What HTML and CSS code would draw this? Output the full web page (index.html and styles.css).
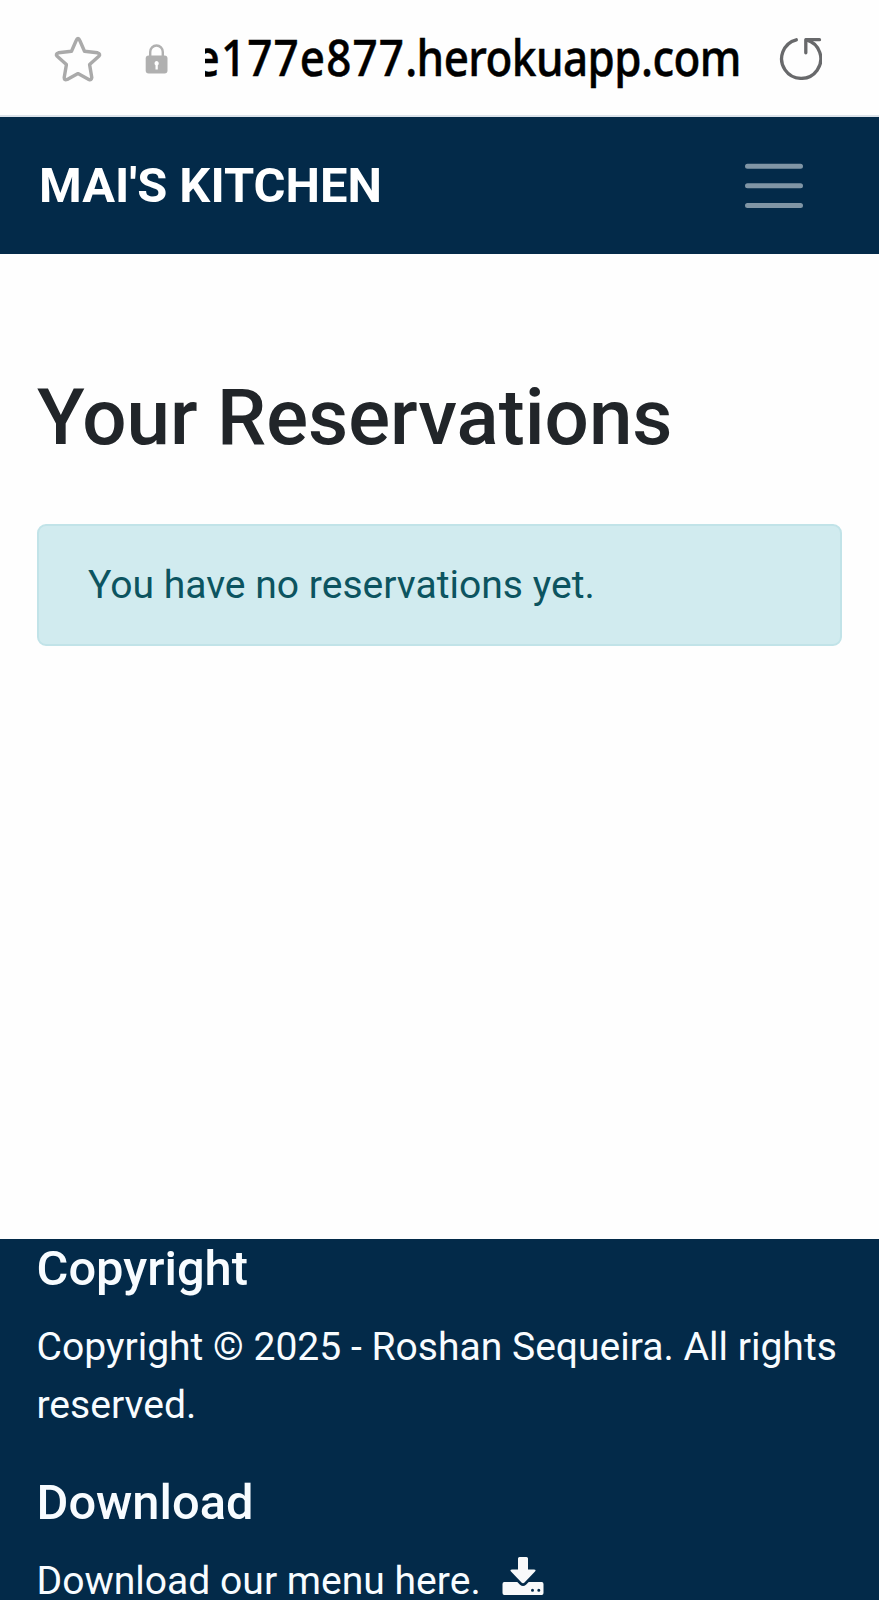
FILE: index.html
```html
<!DOCTYPE html>
<html lang="en">
<head>
<meta charset="utf-8">
<title>Your Reservations</title>
<link rel="stylesheet" href="styles.css">
</head>
<body>
<div class="browser-bar">
  <svg class="icon-star" viewBox="0 0 48 46" aria-hidden="true"><path d="M24 2.5 Q25 2.5 25.8 4.5 L30.5 15.2 L43.5 16.8 Q47 18 44.8 20.3 L35.6 28.6 L37.8 41.5 Q37.4 44.6 34.8 43.4 L24 37.6 L13.2 43.4 Q10.2 44.6 10.2 41.5 L12.4 28.6 L3.2 20.3 Q1 18 4.5 16.8 L17.5 15.2 L22.2 4.5 Q23 2.5 24 2.5 Z"/></svg>
  <svg class="icon-lock" viewBox="0 0 24 30" aria-hidden="true"><path class="shackle" d="M5.2 13V8a6.3 6.5 0 0 1 12.6 0v5"/><rect x=".7" y="11.5" width="21.8" height="18" rx="3"/><path class="keyhole" d="M11.6 17a2.3 2.3 0 0 0-1.1 4.2v4.3h2.3v-4.3A2.3 2.3 0 0 0 11.6 17Z"/></svg>
  <div class="url"><span class="url-text"><span class="url-id">e177e877</span>.herokuapp.com</span></div>
  <svg class="icon-reload" viewBox="0 0 44 44" aria-hidden="true"><path d="M18.3 3.8A19.6 19.6 0 1 0 28.5 3.9"/><path d="M41.5 3.7H27.8V16.8"/></svg>
</div>
<nav class="navbar">
  <a class="brand">MAI'S KITCHEN</a>
  <button class="toggler" aria-label="Toggle navigation"><svg viewBox="0 0 60 46"><path d="M3.5 3.2H56.5M3.5 22.8H56.5M3.5 42.5H56.5"/></svg></button>
</nav>
<main class="content">
  <h1 class="title">Your Reservations</h1>
  <div class="alert">You have no reservations yet.</div>
</main>
<footer class="footer">
  <h5 class="footer-title">Copyright</h5>
  <p class="footer-text">Copyright © 2025 - Roshan Sequeira. All rights reserved.</p>
  <h5 class="footer-title">Download</h5>
  <p class="footer-text menu">Download our menu here.
    <svg class="icon-download" viewBox="0 0 42 40" aria-hidden="true"><path d="M17.5 1H24.5Q26 1 26 2.5V13.5H32Q34.5 13.7 33 15.5L22.5 26.6Q21 28 19.5 26.6L9 15.5Q7.5 13.7 10 13.5H16V2.5Q16 1 17.5 1Z"/><path fill-rule="evenodd" d="M2.3 26H15.3L18 28.7Q21 31.3 24 28.7L26.7 26H39.7Q41.5 26 41.5 28V37Q41.5 39 39.7 39H2.3Q.5 39 .5 37V28Q.5 26 2.3 26ZM29 34.2a1.5 1.5 0 1 0 3 0a1.5 1.5 0 1 0-3 0M35.3 34.2a1.5 1.5 0 1 0 3 0a1.5 1.5 0 1 0-3 0"/></svg>
  </p>
</footer>
</body>
</html>
```
FILE: styles.css
```css
* { box-sizing: border-box; }
body {
  margin: 0;
  height: 1600px;
  overflow: hidden;
  display: flex;
  flex-direction: column;
  background: #fefefe;
  color: #212529;
  font-family: Roboto, sans-serif;
  font-size: 39.07px;
  line-height: 1.5;
}
.browser-bar {
  flex: none;
  display: flex;
  align-items: center;
  height: 117px;
  padding: 0 57px 0 54px;
  border-bottom: 2px solid #dce3ea;
}
.icon-star, .icon-reload, .icon-lock { flex: none; fill: none; stroke-linejoin: round; stroke-linecap: round; }
.icon-star { width: 48px; height: 46px; margin-top: 2px; stroke: #aaa; stroke-width: 3.4; }
.icon-lock { width: 24px; height: 30px; margin: 2px 0 0 43px; fill: #b0b0b0; }
.shackle { fill: none; stroke: #b0b0b0; stroke-width: 2.4; }
.keyhole { fill: #fff; }
.url {
  flex: none;
  display: flex;
  justify-content: flex-end;
  width: 536px;
  height: 80px;
  margin: -1px 0 0 36px;
  overflow: hidden;
  color: #000;
  font: 500 50px/80px "Noto Sans", sans-serif;
  letter-spacing: -.63px;
}
.url-text { flex: none; transform: scaleX(.88); transform-origin: right; -webkit-text-stroke: .5px #000; }
.url-id { letter-spacing: 1.3px; }
.icon-reload { width: 44px; height: 44px; margin: 0 0 0 auto; stroke: #68696b; stroke-width: 3.3; }
.navbar {
  flex: none;
  display: flex;
  align-items: center;
  justify-content: space-between;
  height: 137px;
  padding: 0 75px 0 39px;
  background: #032a49;
}
.brand { color: #fff; font-size: 48.83px; font-weight: 700; }
.toggler { padding: 0; border: 0; background: none; }
.toggler svg { display: block; width: 60px; height: 46px; fill: none; stroke: #8095a5; stroke-width: 5; stroke-linecap: round; }
.content { flex: 1; padding: 117px 37px 0; }
.title { margin: 0 0 59px; font-size: 78.13px; font-weight: 500; line-height: 94px; }
.alert {
  height: 122px;
  padding: 30px 49px;
  border: 2px solid #c1e3e8;
  border-radius: 9px;
  background: #d1ebef;
  color: #0c5460;
}
.footer { flex: none; height: 361px; padding: 1px 36.5px 0; overflow: hidden; background: #032a49; color: #f8fcff; }
.footer-title { margin: 0 0 19px; font-size: 48.83px; font-weight: 500; line-height: 58.6px; }
.footer-text { margin: 0 0 39.5px; }
.menu { display: flex; margin: 0; gap: 21px; }
.icon-download { width: 42px; height: 40px; margin-top: 4px; fill: #f8f9fa; }
```
